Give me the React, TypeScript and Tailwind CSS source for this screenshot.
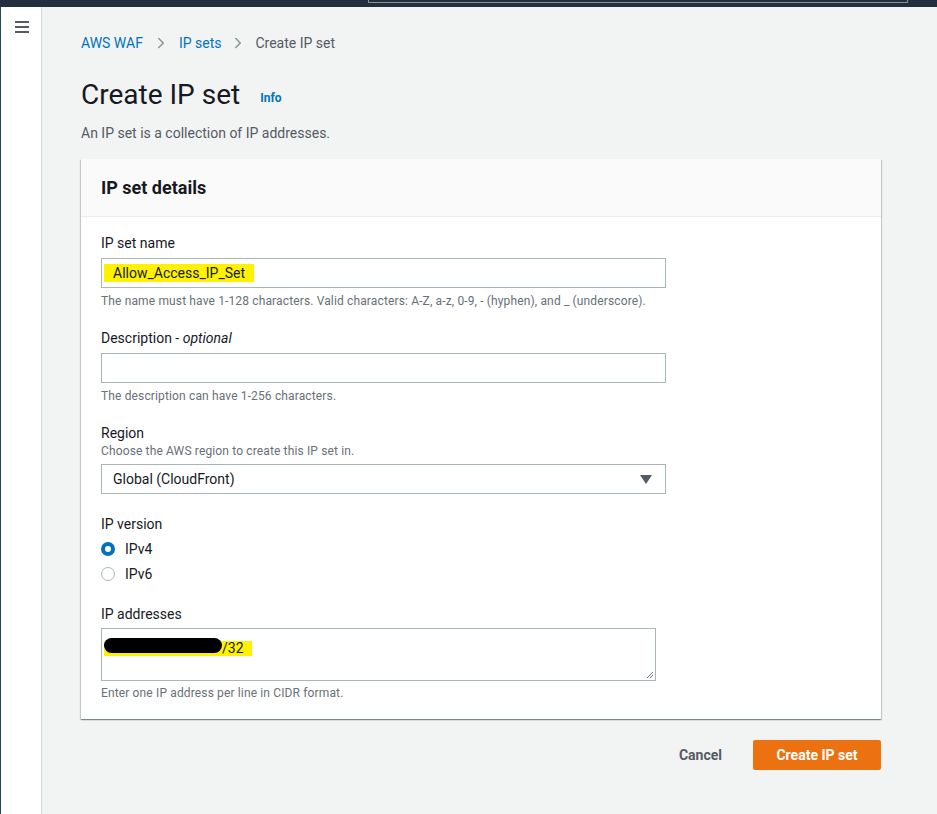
import { ChevronRight } from 'lucide-react';

const font = { fontFamily: 'Roboto, "Noto Sans", Arial, sans-serif' };

function Label({ children }: { children: React.ReactNode }) {
  return <div className="text-[14px] leading-[20px] text-[#16191f]">{children}</div>;
}

function Help({ children }: { children: React.ReactNode }) {
  return <div className="text-[12px] leading-[16px] tracking-[0.14px] text-[#687078]">{children}</div>;
}

export default function App() {
  return (
    <div className="flex h-[814px] w-full flex-col overflow-hidden bg-[#f2f3f3]" style={font}>
      {/* top nav, mostly cropped off */}
      <div className="h-[7px] shrink-0 bg-[#232f3e] pl-[368px] pr-[29px]">
        <div className="h-[3px] rounded-b-[1px] border-x border-b border-[#879596]" />
      </div>

      <div className="flex min-h-0 flex-1">
        <div className="w-[1px] bg-[#1e4a50]" />
        <aside className="w-[41px] shrink-0 border-r border-[#d5dbdb] bg-white pt-[14px]">
          <div className="flex w-[28px] flex-col items-end gap-[3px]">
            <span className="h-[2px] w-[14px] bg-[#545b64]" />
            <span className="h-[2px] w-[14px] bg-[#545b64]" />
            <span className="h-[2px] w-[14px] bg-[#545b64]" />
          </div>
        </aside>

        <main className="min-w-0 flex-1 pl-[39px] pr-[56px]">
          <nav className="mt-[26px] flex items-center text-[14px] leading-[20px]">
            <span className="text-[#0073bb]">AWS WAF</span>
            <ChevronRight className="mx-[9px] h-[18px] w-[18px] text-[#879596]" strokeWidth={2} />
            <span className="text-[#0073bb]">IP sets</span>
            <ChevronRight className="mx-[8px] h-[18px] w-[18px] text-[#879596]" strokeWidth={2} />
            <span className="text-[#545b64]">Create IP set</span>
          </nav>

          <div className="mt-[24px] flex items-baseline">
            <h1 className="text-[28px] leading-[36px] font-normal text-[#16191f]">Create IP set</h1>
            <span className="relative -top-[2px] ml-[20px] text-[12px] font-bold text-[#0073bb]">Info</span>
          </div>
          <p className="mt-[10px] text-[14px] leading-[20px] text-[#545b64]">An IP set is a collection of IP addresses.</p>

          <section className="mt-[16px] bg-white shadow-[0_1px_1px_0_rgba(0,28,36,0.3),1px_1px_1px_0_rgba(0,28,36,0.15),-1px_1px_1px_0_rgba(0,28,36,0.15)]">
            <div className="flex h-[58px] items-center border-b border-[#eaeded] bg-[#fafafa] px-[20px]">
              <h2 className="text-[18px] leading-[22px] font-bold text-[#16191f]">IP set details</h2>
            </div>

            <div className="px-[20px] pt-[16px] pb-[18px]">
              <Label>IP set name</Label>
              <div className="mt-[5px] flex h-[30px] w-[565px] items-center border border-[#aab7b8] px-[2px]">
                <span className="bg-[#fff200] px-[9px] text-[14px] leading-[18px] text-[#16191f]">Allow_Access_IP_Set</span>
              </div>
              <div className="mt-[5px]">
                <Help>The name must have 1-128 characters. Valid characters: A-Z, a-z, 0-9, - (hyphen), and _ (underscore).</Help>
              </div>

              <div className="mt-[19px]">
                <Label>
                  Description - <i>optional</i>
                </Label>
              </div>
              <div className="mt-[5px] h-[30px] w-[565px] border border-[#aab7b8]" />
              <div className="mt-[5px]">
                <Help>The description can have 1-256 characters.</Help>
              </div>

              <div className="mt-[19px]">
                <Label>Region</Label>
              </div>
              <Help>Choose the AWS region to create this IP set in.</Help>
              <div className="mt-[5px] flex h-[30px] w-[565px] items-center justify-between border border-[#aab7b8] pl-[11px] pr-[13px]">
                <span className="text-[14px] text-[#16191f]">Global (CloudFront)</span>
                <svg width="12" height="9" viewBox="0 0 12 9">
                  <path d="M0 0 L12 0 L6 9 Z" fill="#545b64" />
                </svg>
              </div>

              <div className="mt-[20px]">
                <Label>IP version</Label>
              </div>
              <div className="mt-[5px] flex flex-col gap-[5px]">
                <label className="flex h-[20px] items-center gap-[10px] text-[14px] text-[#16191f]">
                  <span className="h-[14px] w-[14px] rounded-full border-[4px] border-[#0073bb] bg-white" />
                  IPv4
                </label>
                <label className="flex h-[20px] items-center gap-[10px] text-[14px] text-[#16191f]">
                  <span className="h-[14px] w-[14px] rounded-full border border-[#aab7b8] bg-white" />
                  IPv6
                </label>
              </div>

              <div className="mt-[20px]">
                <Label>IP addresses</Label>
              </div>
              <div className="relative mt-[4px] h-[53px] w-[555px] border border-[#aab7b8] px-[2px] pt-[7px]">
                <span className="inline-flex h-[15px] items-center bg-[#fff200] pr-[8px] text-[14px] leading-[15px] text-[#16191f]">
                  <span className="-mt-[6px] inline-block h-[15px] w-[118px] rounded-full bg-black" />
                  /32
                </span>
                <svg className="absolute right-[1px] bottom-[1px]" width="8" height="8" viewBox="0 0 8 8">
                  <path d="M7 1 L1 7 M7 4 L4 7" stroke="#687078" strokeWidth="1" />
                </svg>
              </div>
              <div className="mt-[4px]">
                <Help>Enter one IP address per line in CIDR format.</Help>
              </div>
            </div>
          </section>

          <div className="mt-[21px] flex items-center justify-end">
            <span className="mr-[31px] text-[14px] font-bold text-[#545b64]">Cancel</span>
            <button className="h-[30px] w-[128px] rounded-[2px] bg-[#ec7211] text-[14px] font-bold text-white">Create IP set</button>
          </div>
        </main>
      </div>
    </div>
  );
}
